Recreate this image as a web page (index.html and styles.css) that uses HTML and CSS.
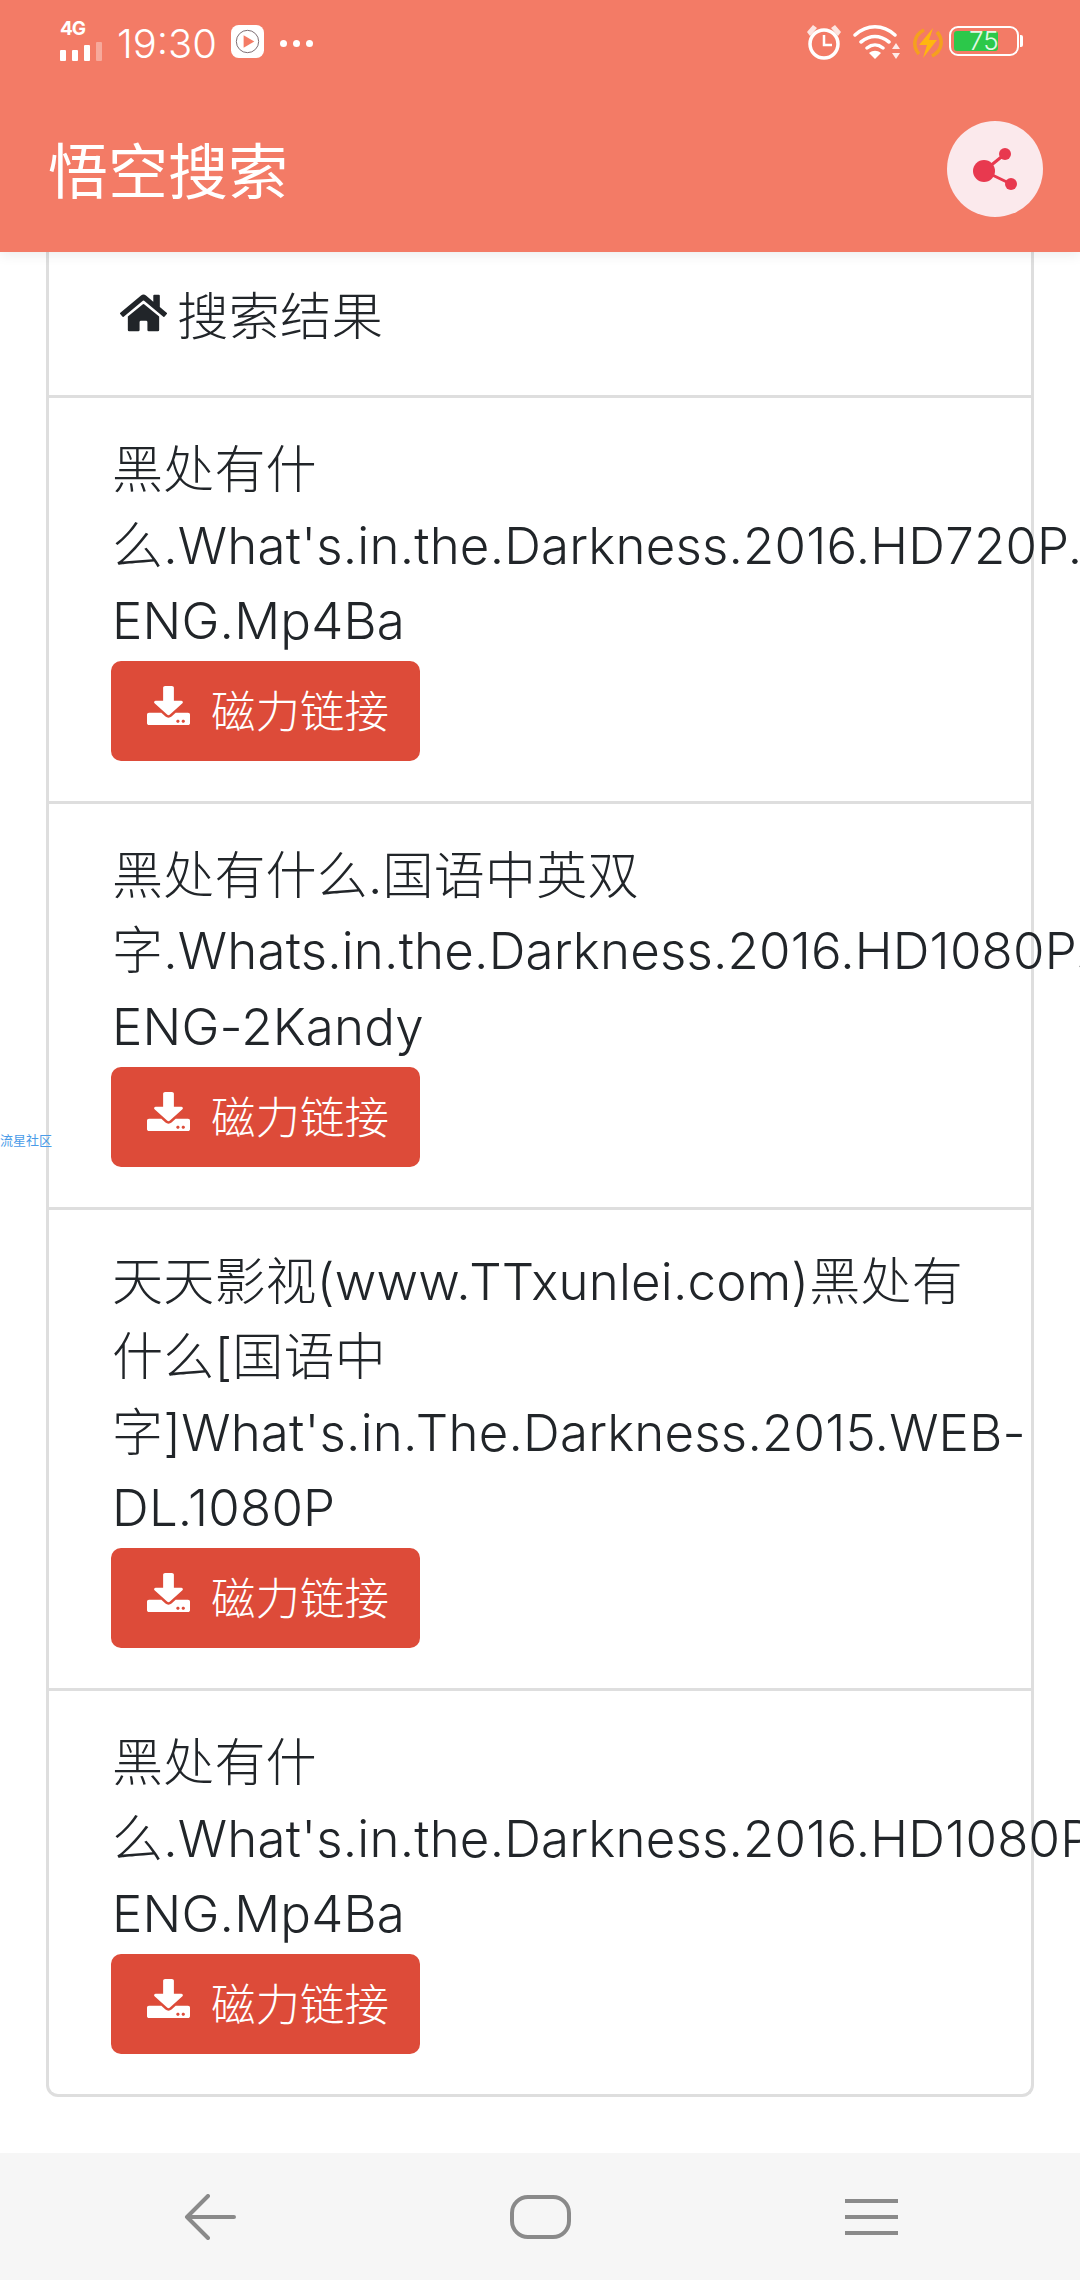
FILE: index.html
```html
<!DOCTYPE html>
<html lang="zh-CN">
<head>
    <meta charset="UTF-8">
    <meta name="viewport" content="width=device-width, initial-scale=1.0">
    <title>悟空搜索</title>
    <link rel="stylesheet" href="styles.css">
</head>
<body>

<svg class="icon-defs" width="0" height="0">
    <symbol id="icon-download" viewBox="0 0 512 512" preserveAspectRatio="none">
        <path d="M216 0h80c13.3 0 24 10.7 24 24v168h87.7c17.8 0 26.7 21.5 14.1 34.1L269.7 378.3c-7.5 7.5-19.8 7.5-27.3 0L90.1 226.1c-12.6-12.6-3.7-34.1 14.1-34.1H192V24c0-13.3 10.7-24 24-24zm296 376v112c0 13.3-10.7 24-24 24H24c-13.3 0-24-10.7-24-24V376c0-13.3 10.7-24 24-24h146.7l49 49c20.1 20.1 52.5 20.1 72.6 0l49-49H488c13.3 0 24 10.7 24 24zm-124 88c0-11-9-20-20-20s-20 9-20 20 9 20 20 20 20-9 20-20zm64 0c0-11-9-20-20-20s-20 9-20 20 9 20 20 20 20-9 20-20z"/>
    </symbol>
</svg>

<header class="top-bar">
    <div class="status-bar">
        <div class="status-left">
            <div class="signal">
                <span class="signal-label">4G</span>
                <div class="signal-bars"><i></i><i></i><i></i><i class="off"></i></div>
            </div>
            <span class="clock">19:30</span>
            <svg class="app-icon" viewBox="0 0 34 34">
                <rect width="34" height="34" rx="8" fill="#fff"/>
                <circle cx="17" cy="17" r="11.5" fill="none" stroke="#7a6a70" stroke-width="1"/>
                <path d="M13 10.5 24 17 13 23.5z" fill="#f47c66"/>
            </svg>
            <div class="dots"><i></i><i></i><i></i></div>
        </div>
        <div class="status-right">
            <svg class="alarm" viewBox="0 0 36 36">
                <circle cx="18" cy="20" r="14" fill="none" stroke="#fff" stroke-width="3.5"/>
                <path d="M18 11v10h8" fill="none" stroke="#fff" stroke-width="2.5"/>
                <path d="M1 8 7 1l4 3-7 8zM35 8l-6-7-4 3 7 8z" fill="#fff" opacity=".8"/>
            </svg>
            <svg class="wifi" viewBox="0 0 48 36">
                <path d="M2 11C14 0 30 0 42 11M8 18c9-7 19-7 28 0M14 24c5-4 11-4 16 0" fill="none" stroke="#fff" stroke-width="3.5" stroke-linecap="round"/>
                <path d="M16 29c4-3 8-3 12 0l-6 6z" fill="#fff"/>
                <path d="M43 19l4 6h-8zM43 35l4-6h-8z" fill="#fff" opacity=".85"/>
            </svg>
            <svg class="charge" viewBox="0 0 30 32">
                <path d="M6 27C-1 19 1 8 11 3M24 5c7 8 5 19-5 24" fill="none" stroke="#f5a01e" stroke-width="3.5"/>
                <path d="M20 1 6 18h8l-4 13 14-18h-8z" fill="#ffb60f"/>
            </svg>
            <div class="battery">
                <div class="battery-fill"></div>
                <span class="battery-text">75</span>
            </div>
            <div class="battery-cap"></div>
        </div>
    </div>
    <div class="app-bar">
        <div class="app-title">悟空搜索</div>
        <button class="share-button">
            <svg viewBox="0 0 46 54" width="46" height="54">
                <path d="M12 29 33 12M12 29 39 42" stroke="#e8394f" stroke-width="3"/>
                <circle cx="12" cy="29" r="11" fill="#e8394f"/>
                <circle cx="33" cy="12" r="6" fill="#e8394f"/>
                <circle cx="39" cy="42" r="6" fill="#e8394f"/>
            </svg>
        </button>
    </div>
</header>

<main class="content">
    <div class="result-card">
        <div class="card-title">
            <svg class="home-icon" viewBox="0 0 576 512"><path d="M280.37 148.26L96 300.11V464a16 16 0 0 0 16 16l112.06-.29a16 16 0 0 0 15.92-16V368a16 16 0 0 1 16-16h64a16 16 0 0 1 16 16v95.64a16 16 0 0 0 16 16.05L464 480a16 16 0 0 0 16-16V300L295.67 148.26a12.19 12.19 0 0 0-15.3 0zM571.6 251.47L488 182.56V44.05a12 12 0 0 0-12-12h-56a12 12 0 0 0-12 12v72.61L318.47 43a48 48 0 0 0-61 0L4.34 251.47a12 12 0 0 0-1.6 16.9l25.5 31A12 12 0 0 0 45.15 301l235.22-193.74a12.19 12.19 0 0 1 15.3 0L530.9 301a12 12 0 0 0 16.9-1.6l25.5-31a12 12 0 0 0-1.7-16.93z"/></svg>
            <span>搜索结果</span>
        </div>
        <div class="result-row">
            <div class="result-name">黑处有什么.What's.in.the.Darkness.2016.HD720P.x264.AAC.CHS-ENG.Mp4Ba</div>
            <a class="magnet-button"><svg class="download-icon"><use href="#icon-download"/></svg>磁力链接</a>
        </div>
        <div class="result-row">
            <div class="result-name">黑处有什么.国语中英双字.Whats.in.the.Darkness.2016.HD1080P.x264.AAC.CHS-ENG-2Kandy</div>
            <a class="magnet-button"><svg class="download-icon"><use href="#icon-download"/></svg>磁力链接</a>
        </div>
        <div class="result-row">
            <div class="result-name">天天影视(www.TTxunlei.com)黑处有什么[国语中字]What's.in.The.Darkness.2015.WEB-DL.1080P</div>
            <a class="magnet-button"><svg class="download-icon"><use href="#icon-download"/></svg>磁力链接</a>
        </div>
        <div class="result-row">
            <div class="result-name">黑处有什么.What's.in.the.Darkness.2016.HD1080P.x264.AAC.CHS-ENG.Mp4Ba</div>
            <a class="magnet-button"><svg class="download-icon"><use href="#icon-download"/></svg>磁力链接</a>
        </div>
    </div>
</main>

<nav class="nav-bar">
    <svg class="nav-back" viewBox="0 0 52 46"><path d="M24 2 3 23l21 21M3 23h47" fill="none" stroke="#8a8a8a" stroke-width="4" stroke-linecap="round" stroke-linejoin="round"/></svg>
    <div class="nav-home"></div>
    <div class="nav-menu"><i></i><i></i><i></i></div>
</nav>

<div class="side-tag">流星社区</div>

</body>
</html>
```
FILE: styles.css
```css
* {
    box-sizing: border-box;
}
body {
    margin: 0;
    width: 1080px;
    height: 2280px;
    overflow: hidden;
    display: flex;
    flex-direction: column;
    position: relative;
    background-color: white;
    color: #212529;
    font-family: Inter, 'Noto Sans CJK SC', sans-serif;
}
.icon-defs {
    position: absolute;
}
.top-bar {
    height: 252px;
    flex: none;
    background-color: #f37b66;
    box-shadow: 0 3px 12px rgba(0, 0, 0, 0.08);
    position: relative;
    color: white;
}
.status-bar {
    height: 86px;
    padding: 21px 57px 0 60px;
    display: flex;
    justify-content: space-between;
}
.status-left {
    display: flex;
    align-items: flex-start;
}
.signal {
    width: 43px;
    margin-right: 14px;
}
.signal-label {
    display: block;
    font-size: 19px;
    line-height: 16px;
    font-weight: 700;
    letter-spacing: -1px;
}
.signal-bars {
    display: flex;
    gap: 6px;
    margin-top: 5px;
    align-items: flex-end;
}
.signal-bars i {
    width: 6px;
    height: 11px;
    background-color: white;
    border-radius: 1px;
}
.signal-bars i:nth-child(3) {
    height: 16px;
}
.signal-bars i.off {
    height: 19px;
    opacity: 0.35;
}
.clock {
    font-size: 40px;
    line-height: 42px;
    margin-top: 2px;
    font-weight: 300;
}
.app-icon {
    width: 33px;
    height: 33px;
    margin: 4px 16px 0 14px;
}
.dots {
    display: flex;
    gap: 6px;
    margin-top: 19px;
}
.dots i {
    width: 7px;
    height: 7px;
    border-radius: 50%;
    background-color: white;
}
.status-right {
    display: flex;
    align-items: flex-start;
}
.alarm {
    width: 36px;
    height: 36px;
    margin: 3px 11px 0 0;
}
.wifi {
    width: 48px;
    height: 36px;
    margin: 3px 12px 0 0;
}
.charge {
    width: 30px;
    height: 32px;
    margin: 6px 6px 0 0;
}
.battery {
    width: 70px;
    height: 30px;
    margin-top: 5px;
    border: 2px solid white;
    border-radius: 9px;
    padding: 3px;
    position: relative;
}
.battery-fill {
    width: 44px;
    height: 100%;
    background-color: #2cc84a;
    border-radius: 3px;
}
.battery-text {
    position: absolute;
    left: 18px;
    top: 0;
    font-size: 26px;
    font-weight: 300;
    line-height: 26px;
    color: #e2f9e5;
}
.battery-cap {
    width: 3px;
    height: 12px;
    margin: 14px 0 0 1px;
    background-color: white;
    border-radius: 0 2px 2px 0;
}
.app-bar {
    height: 166px;
    padding: 34px 37px 34px 48px;
    display: flex;
    justify-content: space-between;
    align-items: center;
}
.app-title {
    font-size: 60px;
    line-height: 70px;
    padding-top: 5px;
}
.share-button {
    width: 96px;
    height: 96px;
    border: none;
    border-radius: 50%;
    background-color: #fbe9ec;
    display: flex;
    align-items: center;
    justify-content: center;
    padding: 0;
}
.content {
    flex: 1;
    padding: 0 46px;
    min-height: 0;
}
.result-card {
    width: 988px;
    border: 3px solid #dedede;
    border-top: none;
    border-radius: 0 0 12px 12px;
}
.card-title {
    height: 143px;
    padding: 0 0 23px 71px;
    display: flex;
    align-items: center;
    gap: 10px;
    font-size: 51.5px;
    font-weight: 300;
}
.home-icon {
    width: 47px;
    height: 42px;
    fill: #212529;
    margin-top: 2px;
}
.result-row {
    border-top: 3px solid #dedede;
    padding: 34px 0 40px 63px;
}
.result-name {
    width: 856px;
    font-size: 51px;
    font-weight: 300;
    letter-spacing: 0.2px;
    line-height: 75.6px;
}
.magnet-button {
    width: 309px;
    height: 100px;
    margin: 2px 0 0 -1px;
    display: flex;
    align-items: center;
    padding: 0 0 4px 36px;
    background-color: #dd4b39;
    border-radius: 10px;
    color: white;
    font-size: 44.5px;
    font-weight: 300;
}
.download-icon {
    width: 43px;
    height: 39px;
    fill: white;
    margin: -7px 21px 0 0;
}
.nav-bar {
    height: 127px;
    flex: none;
    background-color: #f6f6f6;
    display: flex;
    align-items: center;
    padding: 0 182px 0 184px;
    justify-content: space-between;
}
.nav-back {
    width: 52px;
    height: 46px;
}
.nav-home {
    width: 61px;
    height: 44px;
    border: 4px solid #8a8a8a;
    border-radius: 18px;
}
.nav-menu {
    width: 53px;
    display: flex;
    flex-direction: column;
    gap: 12px;
}
.nav-menu i {
    height: 4px;
    background-color: #8a8a8a;
}
.side-tag {
    position: absolute;
    left: 0;
    top: 1132px;
    font-size: 13px;
    line-height: 16px;
    color: #4a9be8;
}
```
